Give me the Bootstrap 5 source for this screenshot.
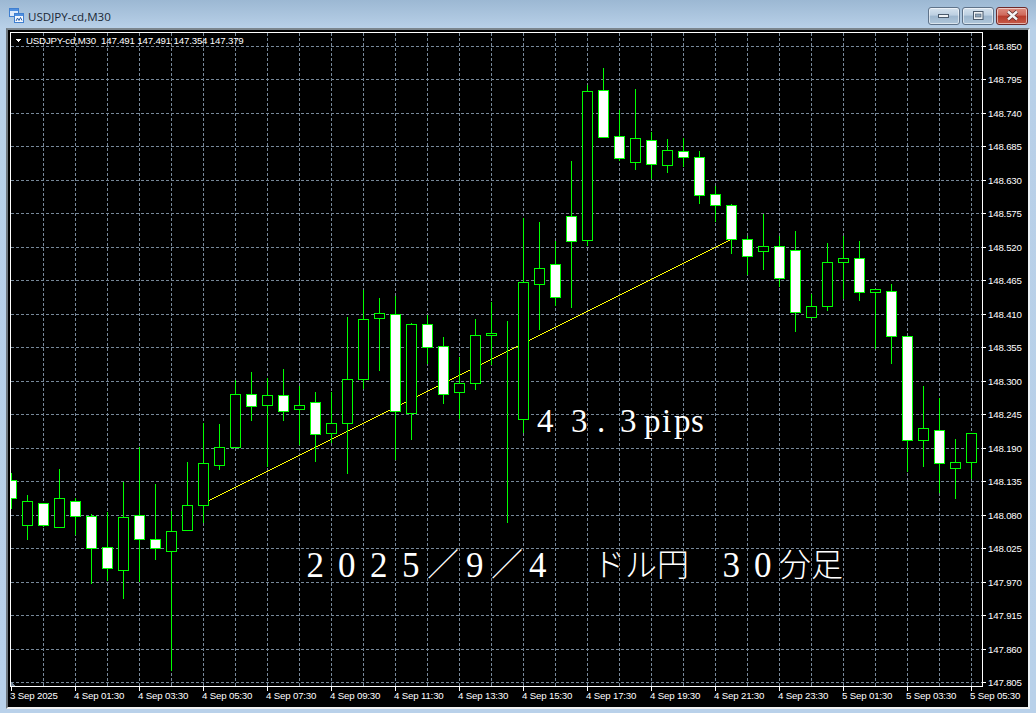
<!DOCTYPE html>
<html lang="ja">

<head>
    <meta charset="UTF-8">
    <title>USDJPY-cd,M30</title>
    <link href="https://cdn.jsdelivr.net/npm/bootstrap@5.3.2/dist/css/bootstrap.min.css" rel="stylesheet">
    <style>
        html, body { height: 100%; overflow: hidden; }
        body { background: linear-gradient(#9cb8d3 0, #b8d0e8 28px, #b9d1ea 100%); }
        .app-window { width: 1036px; height: 713px; padding: 0 6px 4px 6px; }
        .title-bar { height: 28px; padding: 4px 2px 0 3px; }
        .title-text { font: 11.6px "Open Sans", sans-serif; color: #1b2836; margin-left: 4px; position: relative; top: 1px; }
        .win-btns { gap: 2px; }
        .win-btn { width: 32px; height: 18px; padding: 0; border: 1px solid #5f738a; border-radius: 3px;
            background: linear-gradient(#d5e2ee 0, #bccfe1 45%, #9db6ce 50%, #afc6da 100%);
            box-shadow: inset 0 0 0 1px rgba(255, 255, 255, .55); }
        .win-btn-close { border-color: #6e2a2a; background: linear-gradient(#dd8e82 0, #cf6a5c 45%, #b73b2c 50%, #c65a48 100%); }
        .chart-frame { flex: 1 1 auto; min-height: 0; background: #000;
            border-top: 2px solid #7c868e; border-left: 2px solid #6d757c; border-right: 2px solid #eef2f5; border-bottom: 2px solid #f2f2f2; }
        .chart-svg { display: block; width: 1021px; height: 678px; }
        .lbl { font: 9.7px "Liberation Sans", sans-serif; fill: #fff; letter-spacing: -.18px; }
        .big-num { font: 35px "Liberation Serif", serif; fill: #fff; }
        .big-pips { font: 33px "Liberation Serif", serif; fill: #fff; }
        .big-jp { font: 300 32px "Noto Sans CJK JP", sans-serif; fill: #fff; }
    </style>
</head>

<body>
    <div class="app-window d-flex flex-column">
        <div class="title-bar d-flex align-items-center">
            <svg width="15" height="15" viewBox="0 0 15 15">
                <rect x=".5" y=".5" width="9" height="8" fill="#dfeafa" stroke="#3f7fd0" />
                <rect x="1" y="1" width="8" height="2" fill="#4f8fe0" />
                <rect x="5.5" y="5.5" width="9" height="9" fill="#f4f8ff" stroke="#3f7fd0" />
                <rect x="6" y="6" width="8" height="2" fill="#4f8fe0" />
                <path d="M7 13l1.5-3 1.5 2.5 1.5-3 1.5 3" fill="none" stroke="#2b5fa8" />
            </svg>
            <span class="title-text">USDJPY-cd,M30</span>
            <div class="win-btns d-flex ms-auto">
                <button class="win-btn d-flex align-items-center justify-content-center" type="button" aria-label="minimize">
                    <svg width="12" height="6" viewBox="0 0 12 6"><rect x=".5" y="1.5" width="10" height="3" fill="#eef2f6" stroke="#4a5a6c" /></svg>
                </button>
                <button class="win-btn d-flex align-items-center justify-content-center" type="button" aria-label="maximize">
                    <svg width="11" height="10" viewBox="0 0 11 10"><rect x=".5" y=".5" width="9.5" height="8" fill="#eef2f6" stroke="#4a5a6c" /><rect x="2.5" y="3" width="5.5" height="3" fill="#8fa6bc" stroke="#4a5a6c" stroke-width=".6" /></svg>
                </button>
                <button class="win-btn win-btn-close d-flex align-items-center justify-content-center" type="button" aria-label="close">
                    <svg width="13" height="11" viewBox="0 0 13 11"><path d="M2 1.5l9 8M11 1.5l-9 8" stroke="#5b2a2a" stroke-width="4" /><path d="M2 1.5l9 8M11 1.5l-9 8" stroke="#f4f4f4" stroke-width="2.4" /></svg>
                </button>
            </div>
        </div>
        <div class="chart-frame">
            <!-- viewBox keeps screen coordinates so the candles read like the screenshot -->
            <svg id="chart" class="chart-svg" viewBox="8 30 1021 678" shape-rendering="crispEdges"></svg>
        </div>
    </div>

    <script>
        // top wick, body top, body bottom, bottom wick, filled
        const candles = [
            [473, 480, 498, 509, 1], [495, 501, 525, 540, 0], [503, 503, 525, 527, 1], [469, 498, 527, 527, 0],
            [498, 501, 516, 535, 1], [514, 516, 548, 584, 1], [512, 547, 568, 581, 1], [482, 517, 570, 599, 0],
            [447, 515, 539, 582, 1], [484, 539, 548, 560, 1], [511, 531, 551, 671, 0], [462, 505, 530, 530, 0],
            [423, 463, 505, 523, 0], [424, 447, 465, 470, 0], [380, 394, 447, 447, 0], [372, 394, 406, 421, 1],
            [378, 395, 405, 467, 0], [369, 395, 411, 421, 1], [386, 405, 409, 445, 0], [392, 402, 434, 462, 1],
            [392, 423, 433, 443, 0], [317, 379, 423, 474, 0], [290, 319, 379, 389, 0], [298, 313, 318, 371, 0],
            [296, 314, 411, 460, 1], [323, 324, 413, 440, 0], [315, 324, 347, 364, 1], [337, 346, 394, 404, 1],
            [357, 383, 392, 419, 0], [319, 335, 383, 390, 0], [302, 333, 335, 365, 0], [321, 334, 334, 523, 0],
            [218, 282, 419, 433, 0], [222, 268, 284, 330, 0], [241, 264, 297, 306, 1], [161, 216, 241, 308, 1],
            [85, 91, 240, 246, 0], [68, 90, 137, 137, 1], [110, 136, 158, 161, 1], [89, 138, 162, 170, 0],
            [132, 140, 164, 179, 1], [139, 150, 165, 173, 0], [138, 151, 157, 167, 1], [151, 157, 195, 204, 1],
            [186, 194, 205, 222, 1], [204, 205, 239, 254, 1], [236, 239, 256, 275, 1], [214, 246, 251, 270, 0],
            [236, 246, 278, 287, 1], [231, 250, 312, 332, 1], [294, 306, 317, 317, 0], [243, 262, 306, 311, 0],
            [236, 258, 262, 299, 0], [241, 258, 292, 301, 1], [289, 289, 292, 349, 0], [284, 291, 336, 364, 1],
            [336, 336, 440, 472, 1], [386, 428, 440, 467, 0], [398, 430, 463, 493, 1], [439, 462, 468, 499, 0],
            [433, 433, 462, 479, 0]
        ];
        const prices = ["148.850", "148.795", "148.740", "148.685", "148.630", "148.575", "148.520", "148.465", "148.410", "148.355",
            "148.300", "148.245", "148.190", "148.135", "148.080", "148.025", "147.970", "147.915", "147.860", "147.805"];
        const times = ["3 Sep 2025", "4 Sep 01:30", "4 Sep 03:30", "4 Sep 05:30", "4 Sep 07:30", "4 Sep 09:30", "4 Sep 11:30", "4 Sep 13:30",
            "4 Sep 15:30", "4 Sep 17:30", "4 Sep 19:30", "4 Sep 21:30", "4 Sep 23:30", "5 Sep 01:30", "5 Sep 03:30", "5 Sep 05:30"];

        let html = `<defs><clipPath id="plot"><rect x="11" y="33" width="971" height="653" /></clipPath></defs>`;

        // grid
        html += `<g stroke="#778899" stroke-dasharray="3 2" clip-path="url(#plot)">`;
        for (let x = 43; x <= 971; x += 32) html += `<line x1="${x + .5}" y1="33" x2="${x + .5}" y2="686" />`;
        prices.forEach((p, i) => {
            const y = Math.round(46 + i * 33.49);
            html += `<line x1="11" y1="${y + .5}" x2="982" y2="${y + .5}" />`;
        });
        html += `</g>`;
        html += `<polygon points="11,682 16,686 11,686" fill="#778899" />`;

        // trend line
        html += `<line x1="204" y1="503" x2="731" y2="239.5" stroke="#ffff00" />`;

        // candles
        html += `<g clip-path="url(#plot)">`;
        candles.forEach((c, i) => {
            const x = 11 + i * 16;
            html += `<line x1="${x + .5}" y1="${c[0]}" x2="${x + .5}" y2="${c[3]}" stroke="#00ff00" />`;
            html += `<rect x="${x - 4.5}" y="${c[1] + .5}" width="10" height="${c[2] - c[1]}" fill="${c[4] ? "#fff" : "#000"}" stroke="#00ff00" />`;
        });
        html += `</g>`;

        // frame and axes
        html += `<path d="M10.5 32.5H982.5V686.5H10.5Z" fill="none" stroke="#fff" />`;
        prices.forEach((p, i) => {
            const y = Math.round(46 + i * 33.49);
            html += `<line x1="983" y1="${y + .5}" x2="986" y2="${y + .5}" stroke="#fff" />`;
            html += `<text class="lbl" x="988" y="${y + 4}">${p}</text>`;
        });
        times.forEach((t, i) => {
            const x = 11 + i * 64;
            html += `<line x1="${x + .5}" y1="687" x2="${x + .5}" y2="691" stroke="#fff" />`;
            html += `<text class="lbl" x="${x - 1}" y="699">${t}</text>`;
        });

        // header
        html += `<polygon points="15,39 21,39 18,42" fill="#fff" />`;
        html += `<text class="lbl" x="26" y="44" xml:space="preserve">USDJPY-cd,M30  147.491 147.491 147.354 147.379</text>`;

        // annotations
        html += `<text class="big-pips" x="537 571 597 620 644 662 674 691" y="432">43.3pips</text>`;
        html += `<text class="big-num" x="306.5 338 370 402" y="577">2025</text>`;
        html += `<text class="big-jp" x="427" y="576">／</text>`;
        html += `<text class="big-num" x="466" y="577">9</text>`;
        html += `<text class="big-jp" x="491" y="576">／</text>`;
        html += `<text class="big-num" x="529" y="577">4</text>`;
        html += `<text class="big-jp" x="593" y="576">ドル円</text>`;
        html += `<text class="big-num" x="722.5 754" y="577">30</text>`;
        html += `<text class="big-jp" x="779" y="576">分足</text>`;

        document.getElementById("chart").innerHTML = html;
    </script>
    <script src="https://cdn.jsdelivr.net/npm/bootstrap@5.3.2/dist/js/bootstrap.bundle.min.js"></script>
</body>

</html>
